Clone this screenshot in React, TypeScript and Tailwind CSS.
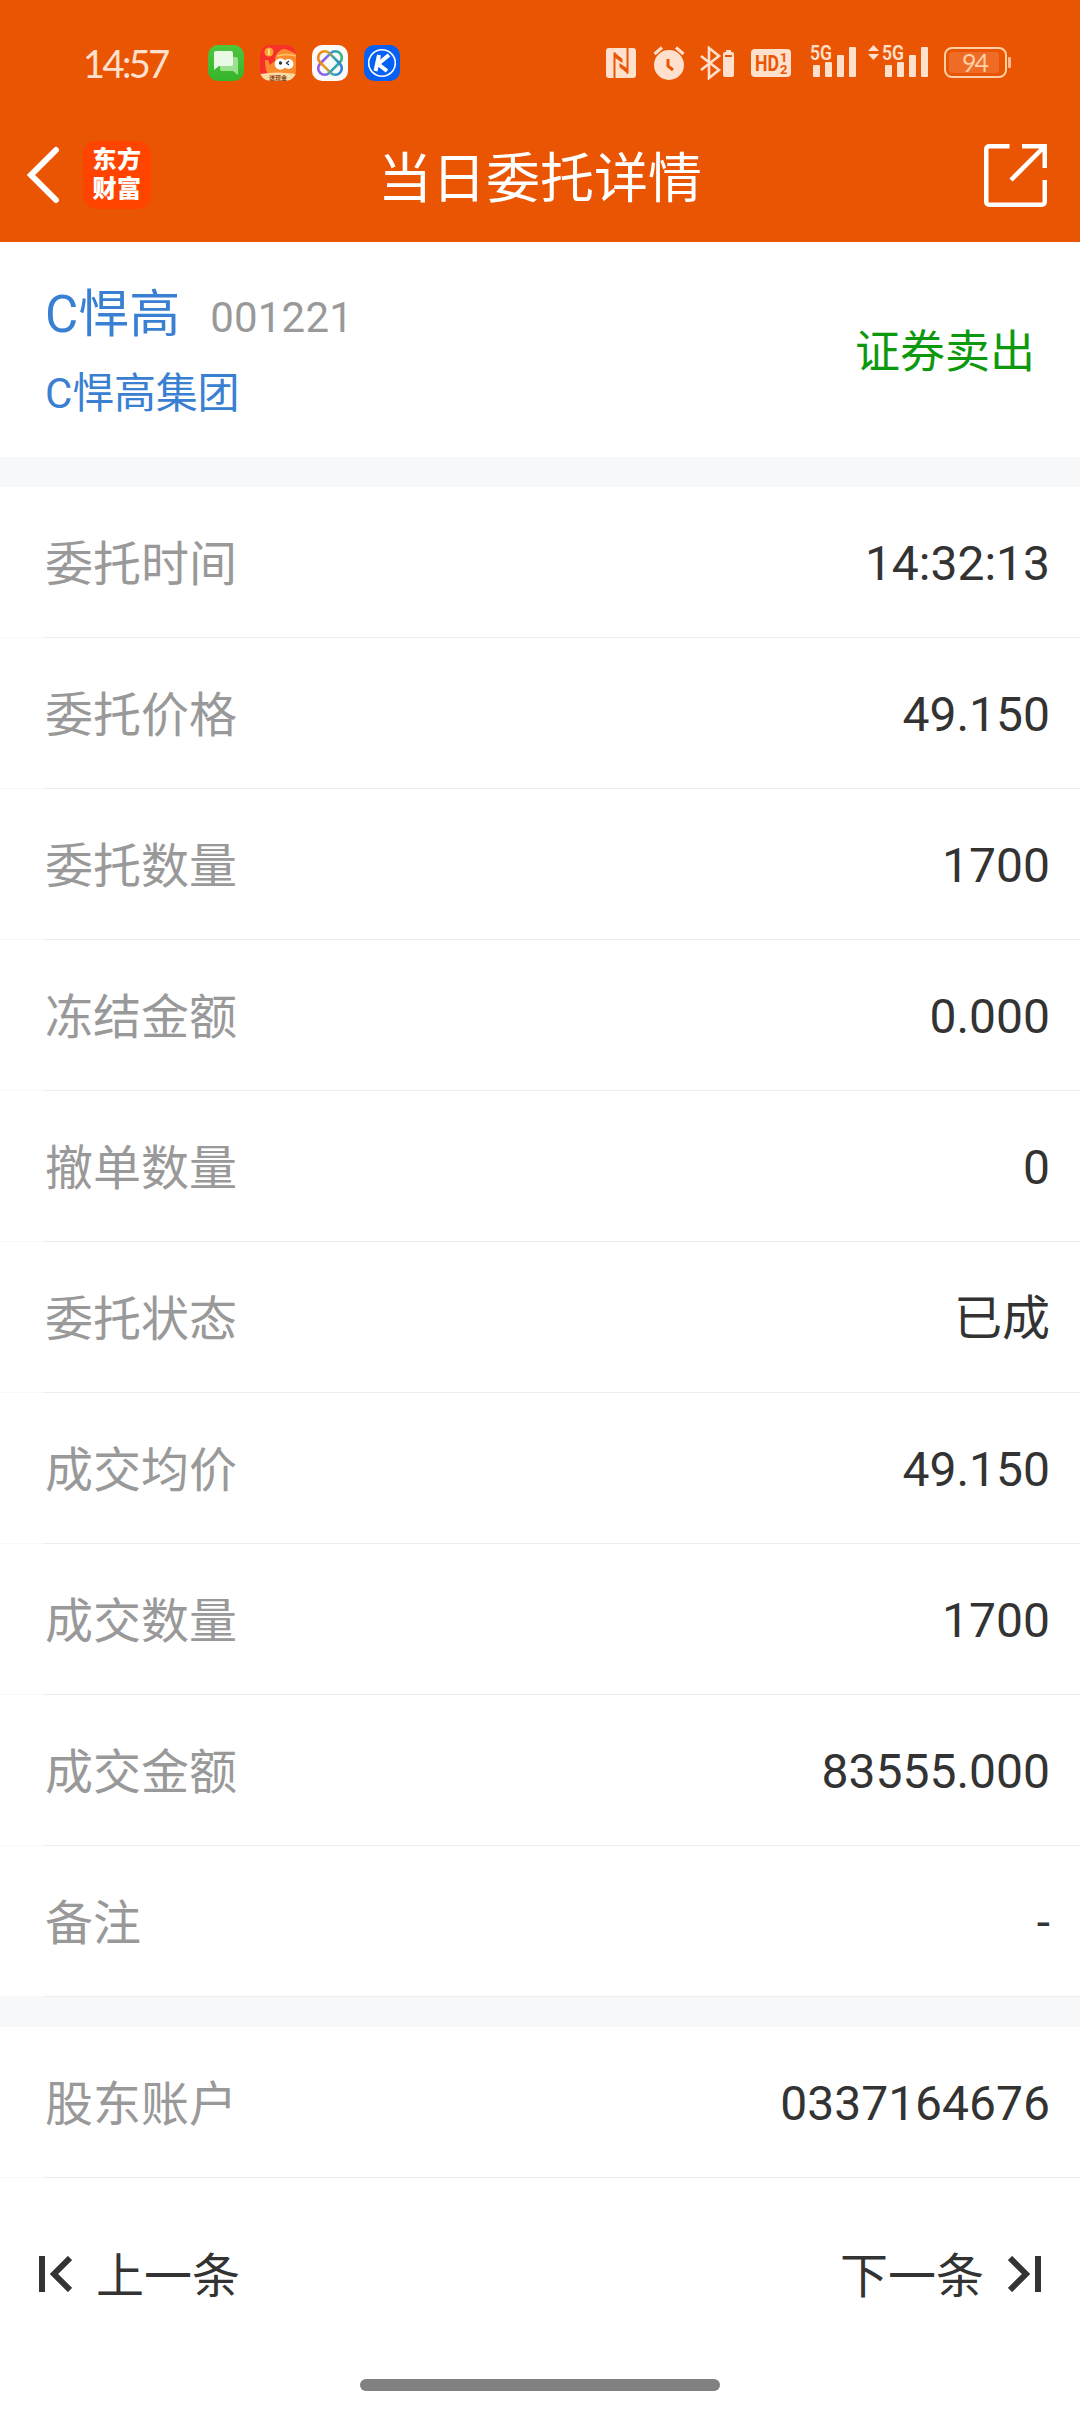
import type { ReactNode } from 'react'
import { clsx } from 'clsx'

interface DetailItem {
  label: string
  value: string
}

const ORDER_DETAILS: DetailItem[] = [
  { label: '委托时间', value: '14:32:13' },
  { label: '委托价格', value: '49.150' },
  { label: '委托数量', value: '1700' },
  { label: '冻结金额', value: '0.000' },
  { label: '撤单数量', value: '0' },
  { label: '委托状态', value: '已成' },
  { label: '成交均价', value: '49.150' },
  { label: '成交数量', value: '1700' },
  { label: '成交金额', value: '83555.000' },
  { label: '备注', value: '-' }
]

const ACCOUNT_DETAILS: DetailItem[] = [{ label: '股东账户', value: '0337164676' }]

export default function App() {
  return (
    <div className="flex h-[2412px] w-[1080px] flex-col overflow-hidden bg-white font-[Roboto,'Noto_Sans_CJK_SC',sans-serif]">
      <header className="h-[242px] bg-[#ea5504] text-white">
        <StatusBar />
        <TitleBar />
      </header>

      <StockSummary />
      <Divider />
      <DetailList items={ORDER_DETAILS} />
      <Divider />
      <DetailList items={ACCOUNT_DETAILS} />
      <Pager />

      {/* Home indicator */}
      <div className="mx-auto mt-auto mb-[21px] h-3 w-[360px] rounded-full bg-[#808080]" />
    </div>
  )
}

function StatusBar() {
  return (
    <div className="flex h-[108px] items-center pt-[17px] pr-[69px] pl-[83px] text-[#ffe0cc]">
      <span className="w-[125px] font-[Lato] text-[38px] leading-none tracking-[-2.6px]">14:57</span>
      <div className="flex gap-4">
        <MessageIcon />
        <MascotIcon />
        <KnotIcon />
        <KIcon />
      </div>

      <div className="ml-auto flex items-center">
        <NfcIcon />
        <AlarmIcon />
        <BluetoothIcon />
        <HdIcon />
        <SignalIcon className="ml-[19px]" />
        <SignalIcon className="ml-3" withArrows />
        <BatteryIcon />
      </div>
    </div>
  )
}

function TitleBar() {
  return (
    <div className="flex h-[134px] items-center justify-between pr-[33px] pl-[26px]">
      <div className="flex w-[260px] items-center">
        <svg className="h-[58px] w-[34px]" viewBox="0 0 34 58" fill="none">
          <path d="M30 4 5 29l25 25" stroke="currentColor" strokeWidth="6" strokeLinecap="round" />
        </svg>
        <div className="ml-[23px] flex size-[68px] flex-col items-center justify-center rounded-[14px] bg-[#ff4400] text-[24px] leading-[29px] font-black tracking-[0.5px]">
          <span>东方</span>
          <span>财富</span>
        </div>
      </div>
      <h1 className="pt-[9px] text-[54px] leading-none font-normal">当日委托详情</h1>
      <div className="flex w-[253px] justify-end">
        <svg className="size-[63px]" viewBox="0 0 63 63" fill="none" stroke="currentColor" strokeWidth="4.500">
          <path d="M25.500 2.250H5a2.750 2.750 0 0 0-2.750 2.750v53A2.750 2.750 0 0 0 5 60.750h53a2.750 2.750 0 0 0 2.750-2.750V36" />
          <path d="M38 2.250h22.750V24M60 3 27 36" />
        </svg>
      </div>
    </div>
  )
}

function StockSummary() {
  return (
    <section className="flex h-[215px] items-center justify-between px-[45px] pt-[5px]">
      <div className="text-[#3a80d2]">
        <div className="flex items-baseline gap-[30px]">
          <h2 className="text-[51px] leading-[60px] font-normal">C悍高</h2>
          <span className="text-[42px] tracking-[0.2px] text-[#999999]">001221</span>
        </div>
        <p className="mt-[20px] text-[42px] leading-[50px] tracking-[-0.2px]">C悍高集团</p>
      </div>
      <span className="pt-px text-[45px] leading-none text-[#0d990d]">证券卖出</span>
    </section>
  )
}

function Divider() {
  return <div className="h-[30px] shrink-0 bg-[#f6f8fa]" />
}

function DetailList({ items }: { items: DetailItem[] }) {
  return (
    <ul>
      {items.map((item) => (
        <li key={item.label}>
          <div className="flex h-[150px] items-center justify-between pt-1 pr-[30px] pl-[45px] text-[48px] leading-none">
            <span className="pt-px text-[#999999]">{item.label}</span>
            <span className="text-[#333333]">{item.value}</span>
          </div>
          <div className="flex h-px bg-[#f7f7f7]">
            <div className="ml-[45px] flex-1 bg-[#ececec]" />
          </div>
        </li>
      ))}
    </ul>
  )
}

function Pager() {
  return (
    <nav className="flex h-[192px] items-center justify-between px-[39px] text-[48px] leading-none text-[#333333]">
      <button className="flex items-center gap-6">
        <SkipIcon />
        <span className="pt-[5px]">上一条</span>
      </button>
      <button className="flex items-center gap-6">
        <span className="pt-[5px]">下一条</span>
        <SkipIcon flipped />
      </button>
    </nav>
  )
}

function SkipIcon({ flipped }: { flipped?: boolean }) {
  return (
    <svg className={clsx('h-9 w-[33px]', flipped && '-scale-x-100')} viewBox="0 0 33 36" fill="none" stroke="currentColor">
      <path d="M3 0v36" strokeWidth="6" />
      <path d="M31 2 15 18l16 16" strokeWidth="6" />
    </svg>
  )
}

/* Notification icons */

function AppTile({ className, children }: { className: string; children: ReactNode }) {
  return (
    <div className={clsx('size-9 overflow-hidden rounded-[10px]', className)}>
      <svg className="size-9" viewBox="0 0 36 36" fill="none">
        {children}
      </svg>
    </div>
  )
}

function MessageIcon() {
  return (
    <AppTile className="bg-linear-to-b from-[#4fc53c] to-[#35b52c]">
      <path d="M14 12h14a2 2 0 0 1 2 2v16l-5-4H14a2 2 0 0 1-2-2V14a2 2 0 0 1 2-2Z" fill="#9be08f" />
      <path d="M8 6h15a2 2 0 0 1 2 2v11a2 2 0 0 1-2 2H11l-5 4V8a2 2 0 0 1 2-2Z" fill="#e9f9e6" />
    </AppTile>
  )
}

function MascotIcon() {
  return (
    <AppTile className="bg-[#f8302b]">
      <path d="M15 16c0-6 3-10 8-12 4 0 8 2 13 5v23H14c-6 0-9-6-9-17h3l2 5c2-2 3-3 5-4Z" fill="#fb8b2c" />
      <circle cx="9" cy="7" r="4.500" fill="#fda32f" />
      <path d="M9 4v6" stroke="#ffe08a" strokeWidth="2" />
      <path d="M17 11c6-2 13-2 19 0" stroke="#ffc46a" strokeWidth="1.500" />
      <circle cx="20.500" cy="19" r="5.800" fill="#fff" />
      <circle cx="28.500" cy="19" r="5" fill="#fff" />
      <circle cx="20.500" cy="18" r="1.700" fill="#333" />
      <path d="m29 16-2.500 2 2.500 2" stroke="#333" strokeWidth="1.300" />
      <path d="M0 29c12-2 24-2 36 0v7H0Z" fill="#fbdca6" />
      <text x="18" y="34.500" textAnchor="middle" fontSize="6" fontWeight="700" fill="#8a4513">送现金</text>
    </AppTile>
  )
}

function KnotIcon() {
  return (
    <AppTile className="bg-[#fafafa]">
      <defs>
        <linearGradient id="knot" x1="6" y1="28" x2="30" y2="8" gradientUnits="userSpaceOnUse">
          <stop offset="0" stopColor="#a050e0" />
          <stop offset=".35" stopColor="#8a62ea" />
          <stop offset=".6" stopColor="#2fa0c0" />
          <stop offset="1" stopColor="#3cc24c" />
        </linearGradient>
        <linearGradient id="knot-warm" x1="8" y1="7" x2="28" y2="30" gradientUnits="userSpaceOnUse">
          <stop offset="0" stopColor="#f0781c" />
          <stop offset=".35" stopColor="#e8a020" />
          <stop offset=".6" stopColor="#35a9ab" />
          <stop offset="1" stopColor="#2f6df0" />
        </linearGradient>
      </defs>
      <rect x="11.500" y="4" width="13" height="28" rx="6.500" transform="rotate(45 18 18)" stroke="url(#knot)" strokeWidth="2.600" />
      <rect x="11.500" y="4" width="13" height="28" rx="6.500" transform="rotate(-45 18 18)" stroke="url(#knot-warm)" strokeWidth="2.600" />
      {/* the bands only weave along the rim, the middle stays open */}
      <rect x="13.500" y="13.500" width="9" height="9" rx="2" transform="rotate(45 18 18)" fill="#fafafa" />
    </AppTile>
  )
}

function KIcon() {
  return (
    <AppTile className="bg-[#0560f5]">
      <circle cx="18" cy="18" r="13.300" stroke="#fff" strokeWidth="1.600" />
      <path d="m15 10-3.500 16M25 10 14 19l9 7" stroke="#fff" strokeWidth="4" />
    </AppTile>
  )
}

/* System icons */

function NfcIcon() {
  return (
    <svg className="h-[30px] w-[30px]" viewBox="0 0 30 30" fill="none">
      <rect width="30" height="30" rx="3" fill="currentColor" />
      <path d="M8.500 30V4.500M21.500 25.500V0" stroke="#ea5504" strokeWidth="2" />
      <path d="m8 4 8.500 7v4L8 9ZM22 26l-8.500-7v-4L22 21Z" fill="#ea5504" />
    </svg>
  )
}

function AlarmIcon() {
  return (
    <svg className="ml-[17px] h-[34px] w-8" viewBox="0 0 32 34" fill="none">
      <circle cx="16" cy="19" r="15" fill="currentColor" />
      <path d="M1.500 8 9 1.500M30.500 8 23 1.500" stroke="currentColor" strokeWidth="3" />
      <path d="M15 13v7l5 4" stroke="#ea5504" strokeWidth="3" />
    </svg>
  )
}

function BluetoothIcon() {
  return (
    <svg className="ml-[15px] h-[34px] w-[34px]" viewBox="0 0 34 34" fill="none">
      <path d="m1 10 18 14-10 8V2l10 8L1 24" stroke="currentColor" strokeWidth="2.600" />
      <path d="M26 4h5v2h-5z" fill="currentColor" />
      <rect x="23" y="6" width="11" height="25" rx="2" fill="currentColor" />
      <path d="M25 10h7" stroke="#ea5504" strokeWidth="2" />
    </svg>
  )
}

function HdIcon() {
  return (
    <svg className="ml-[17px] h-7 w-10" viewBox="0 0 40 28">
      <rect width="40" height="28" rx="4" fill="currentColor" />
      <g fill="#ea5504" fontFamily="Roboto" fontWeight="700">
        <text x="4" y="22" fontSize="22" textLength="24" lengthAdjust="spacingAndGlyphs">HD</text>
        <text x="29" y="13" fontSize="13">1</text>
        <text x="29" y="25" fontSize="13">2</text>
      </g>
    </svg>
  )
}

function SignalIcon({ className, withArrows }: { className: string; withArrows?: boolean }) {
  return (
    <div className={clsx('-mt-[9px] flex', className)}>
      {withArrows && (
        <svg className="mr-[3px] h-[38px] w-[11px]" viewBox="0 0 11 38" fill="currentColor">
          <path d="M5.500 6 11 12H0ZM5.500 21 11 15H0Z" />
        </svg>
      )}
      <svg className="h-[38px] w-[46px]" viewBox="0 0 46 38" fill="currentColor">
        <text x="0" y="21" fontFamily="Roboto" fontSize="21" fontWeight="600" textLength="22" lengthAdjust="spacingAndGlyphs">
          5G
        </text>
        <rect x="3" y="26" width="7" height="12" rx="1" />
        <rect x="15" y="23" width="7" height="15" rx="1" />
        <rect x="27" y="16" width="7" height="22" rx="1" />
        <rect x="39" y="8" width="7" height="30" rx="1" />
      </svg>
    </div>
  )
}

function BatteryIcon() {
  return (
    <svg className="ml-4 h-[31px] w-[67px]" viewBox="0 0 67 31">
      <rect x="1" y="1" width="61" height="29" rx="7" fill="none" stroke="#ffcfa5" strokeWidth="2" />
      <rect x="5" y="5" width="50" height="21" rx="3" fill="#ee6c26" />
      <rect x="64" y="10" width="3" height="11" rx="1" fill="#ffb98c" />
      <text x="31.500" y="24.500" textAnchor="middle" fontFamily="Lato" fontSize="25" textLength="27" fill="#ffcfa5">
        94
      </text>
    </svg>
  )
}
